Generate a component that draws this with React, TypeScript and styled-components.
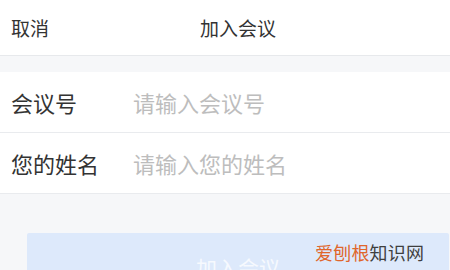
import React from 'react';
import styled, { createGlobalStyle } from 'styled-components';

const GlobalStyle = createGlobalStyle`
  html, body {
    margin: 0;
    padding: 0;
    background: #f6f7f9;
    overflow: hidden;
  }
  body {
    font-family: "Noto Sans CJK SC", "Noto Sans", sans-serif;
  }
`;

const Page = styled.div`
  position: relative;
  width: 450px;
  height: 270px;
  overflow: hidden;
  background: #f6f7f9;
  display: flex;
  flex-direction: column;

  & > * {
    flex-shrink: 0;
  }
`;

const Header = styled.header`
  height: 55px;
  background: #fff;
  border-bottom: 1px solid #e7e9ec;
  display: grid;
  grid-template-columns: 189px auto;
  align-items: center;
  padding: 0 11px;
  font-size: 19px;
  color: #333;
`;

const Cancel = styled.span`
  justify-self: start;
`;

const Title = styled.h1`
  margin: 0;
  font-size: 19px;
  font-weight: 400;
  color: #333;
`;

const Form = styled.section`
  margin-top: 16px;
  background: #fff;
  display: flex;
  flex-direction: column;
`;

const Row = styled.label`
  height: 60px;
  display: flex;
  align-items: center;
  padding-left: 11px;
  border-bottom: 1px solid #e9ebee;
`;

const Label = styled.span`
  width: 122px;
  font-size: 22px;
  color: #333;
`;

const Input = styled.input`
  flex: 1;
  min-width: 0;
  border: none;
  outline: none;
  background: transparent;
  padding: 0;
  font-family: inherit;
  font-size: 22px;
  color: #333;

  &::placeholder {
    color: #bdbdbd;
  }
`;

const JoinButton = styled.button`
  margin: 39px 1px 0 27px;
  height: 60px;
  border: none;
  border-radius: 2px;
  background: #dde9fb;
  color: #f6f9fe;
  font-family: inherit;
  font-size: 21px;
  padding-top: 8px;
`;

const Watermark = styled.div`
  position: absolute;
  left: 315px;
  top: 239px;
  font-size: 18px;
  letter-spacing: 0.2px;
  color: #3f3f3f;
  white-space: nowrap;
`;

const Brand = styled.span`
  color: #e0662c;
`;

export default function App() {
  return (
    <Page>
      <GlobalStyle />
      <Header>
        <Cancel>取消</Cancel>
        <Title>加入会议</Title>
      </Header>
      <Form>
        <Row>
          <Label>会议号</Label>
          <Input placeholder="请输入会议号" />
        </Row>
        <Row>
          <Label>您的姓名</Label>
          <Input placeholder="请输入您的姓名" />
        </Row>
      </Form>
      <JoinButton>加入会议</JoinButton>
      <Watermark>
        <Brand>爱刨根</Brand>知识网
      </Watermark>
    </Page>
  );
}
